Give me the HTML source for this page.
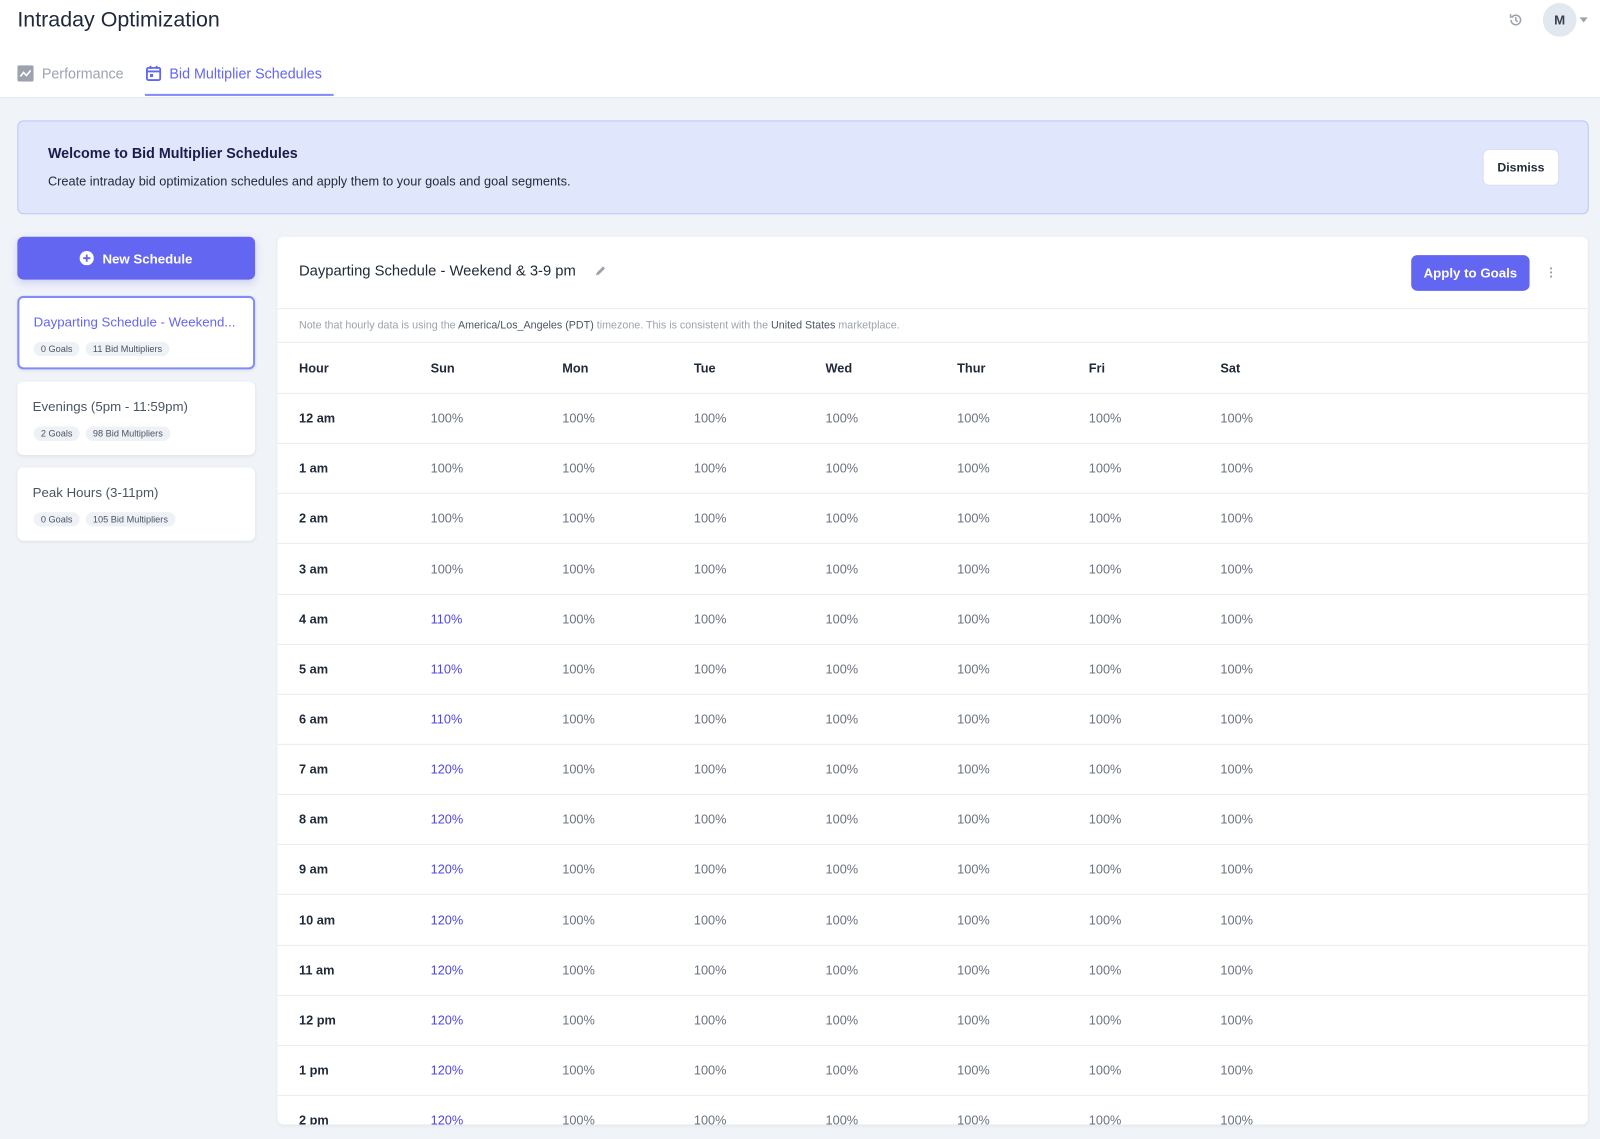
<!DOCTYPE html>
<html><head><meta charset="utf-8"><style>
*{box-sizing:border-box;margin:0;padding:0}
html,body{width:1600px;height:1138px;overflow:hidden;background:#f0f3f8}
#w{position:absolute;left:0;top:0;width:1568px;height:1116px;transform:scale(1.0204);transform-origin:0 0;font-family:"Liberation Sans",sans-serif;color:#1f2937}
.top{position:absolute;left:0;top:0;width:1568px;height:96px;background:#fff;border-bottom:1px solid #e5e9f0}
.title{position:absolute;left:17px;top:8px;font-size:21px;color:#1e293b}
.tab{position:absolute;top:64px;font-size:14px;display:flex;align-items:center;gap:8px}
.banner{position:absolute;left:17px;top:118px;width:1540px;height:92px;background:#e0e6fc;border:1px solid #bcc8f5;border-radius:6px}
.btn{position:absolute;border-radius:6px;font-size:13px;display:flex;align-items:center;justify-content:center}
.side{position:absolute;left:17px;width:233px;background:#fff;border-radius:6px;box-shadow:0 1px 3px rgba(0,0,0,.08)}
.side .n{position:absolute;left:15px;top:17px;font-size:13px;color:#4b5563}
.pill{display:inline-block;background:#eef1f5;border-radius:8px;font-size:9px;padding:2px 7px;color:#4b5563;margin-right:6px}
.pills{position:absolute;left:16px;top:41px}
.card{position:absolute;left:272px;top:232px;width:1284px;height:870px;background:#fff;border-radius:6px;overflow:hidden;box-shadow:0 1px 3px rgba(0,0,0,.06)}
.row{position:absolute;left:0;width:1284px;border-bottom:1px solid #e9ecf1;font-size:12.5px;color:#6b7280}
.row span{position:absolute;top:50%;transform:translateY(-50%)}
.row span.h{color:#1f2937;font-weight:bold}
.b{color:#4f46e5!important}
</style></head><body><div id="w">
<div class="top">
<div class="title">Intraday Optimization</div>
<div class="tab" style="left:17px;color:#9ca3af"><svg width="16" height="16" viewBox="0 0 16 16"><rect width="16" height="16" rx="2" fill="#9ca3af"/><path d="M3 11l3-4 3 3 4-5" stroke="#fff" stroke-width="1.6" fill="none"/></svg>Performance</div>
<div class="tab" style="left:143px;color:#6366f1"><svg width="15" height="16" viewBox="0 0 15 16"><rect x="1" y="2.5" width="13" height="12" rx="1.5" stroke="#6366f1" stroke-width="1.8" fill="none"/><path d="M1 6h13M4.5 0.5v3M10.5 0.5v3" stroke="#6366f1" stroke-width="1.8"/><rect x="4" y="8.5" width="3" height="3" fill="#6366f1"/></svg>Bid Multiplier Schedules</div>
<div style="position:absolute;left:142px;top:92px;width:185px;height:2px;background:#818cf8"></div>
<svg style="position:absolute;left:1478px;top:12px" width="15" height="15" viewBox="0 0 16 16"><path d="M3 8a5 5 0 1 0 1.5-3.5M2.5 2v3h3M8 5v3.5l2 1.5" stroke="#9ca3af" stroke-width="1.6" fill="none"/></svg>
<div style="position:absolute;left:1512px;top:3px;width:33px;height:33px;border-radius:50%;background:#e2e8f0;font-size:13px;color:#374151;font-weight:bold;display:flex;align-items:center;justify-content:center">M</div>
<div style="position:absolute;left:1548px;top:17px;border:4px solid transparent;border-top:5px solid #9ca3af"></div>
</div>
<div class="banner">
<div style="position:absolute;left:29px;top:23px;font-size:14px;font-weight:bold;color:#1e1b4b">Welcome to Bid Multiplier Schedules</div>
<div style="position:absolute;left:29px;top:52px;font-size:12.5px;color:#1f2937">Create intraday bid optimization schedules and apply them to your goals and goal segments.</div>
<div class="btn" style="left:1435px;top:27px;width:75px;height:36px;background:#fff;border:1px solid #d9def0;color:#1f2937;font-weight:bold;font-size:12px">Dismiss</div>
</div>
<div class="btn" style="left:17px;top:232px;width:233px;height:42px;background:#6366f1;color:#fff;font-weight:bold;box-shadow:0 3px 8px rgba(99,102,241,.25)"><svg width="14" height="14" viewBox="0 0 14 14" style="margin-right:8px"><circle cx="7" cy="7" r="7" fill="#fff"/><path d="M7 3.5v7M3.5 7h7" stroke="#6366f1" stroke-width="1.8"/></svg>New Schedule</div>
<div class="side" style="top:290px;height:72px;border:2px solid #818cf8"><div class="n" style="color:#6366f1;left:14px;top:16px">Dayparting Schedule - Weekend...</div><div class="pills" style="left:14px;top:40px"><span class="pill">0 Goals</span><span class="pill">11 Bid Multipliers</span></div></div>
<div class="side" style="top:374px;height:72px"><div class="n">Evenings (5pm - 11:59pm)</div><div class="pills"><span class="pill">2 Goals</span><span class="pill">98 Bid Multipliers</span></div></div>
<div class="side" style="top:458px;height:72px"><div class="n">Peak Hours (3-11pm)</div><div class="pills"><span class="pill">0 Goals</span><span class="pill">105 Bid Multipliers</span></div></div>
<div class="card">
<div style="position:absolute;left:21px;top:26px;font-size:14.5px;color:#1f2937">Dayparting Schedule - Weekend &amp; 3-9 pm</div>
<svg style="position:absolute;left:310px;top:28px" width="12" height="12" viewBox="0 0 12 12"><path d="M2 10l1-3 6-6 2 2-6 6z" fill="#9ca3af"/></svg>
<div class="btn" style="left:1111px;top:18px;width:116px;height:35px;background:#6366f1;color:#fff;font-weight:bold">Apply to Goals</div>
<div style="position:absolute;left:1247px;top:29px;width:2px;height:12px;background:radial-gradient(circle,#9ca3af 1px,transparent 1px) 0 0/2px 4px"></div>
<div style="position:absolute;left:0;top:70px;width:1284px;border-top:1px solid #e9ecf1;border-bottom:1px solid #e9ecf1;height:34px;font-size:10.5px;color:#9ca3af;padding:10px 21px">Note that hourly data is using the <span style="color:#4b5563">America/Los_Angeles (PDT)</span> timezone. This is consistent with the <span style="color:#4b5563">United States</span> marketplace.</div>
<div id="t"></div>
</div>
</div>
<script>
var cols=[21,150,279,408,537,666,795,924],h='';
var hd=['Hour','Sun','Mon','Tue','Wed','Thur','Fri','Sat'];
h+='<div class="row" style="top:104px;height:50px">'+hd.map((t,i)=>'<span class="h" style="left:'+cols[i]+'px;font-size:12.5px">'+t+'</span>').join('')+'</div>';
var hrs=['12 am','1 am','2 am','3 am','4 am','5 am','6 am','7 am','8 am','9 am','10 am','11 am','12 pm','1 pm','2 pm'];
hrs.forEach((r,k)=>{var sun=k<4?'100%':k<7?'110%':'120%';
h+='<div class="row" style="top:'+(154+k*49.15)+'px;height:49.15px"><span class="h" style="left:21px">'+r+'</span><span class="'+(k>=4?'b':'')+'" style="left:150px">'+sun+'</span>';
for(var i=2;i<8;i++)h+='<span style="left:'+cols[i]+'px">100%</span>';h+='</div>';});
document.getElementById('t').innerHTML=h;
</script>
</body></html>
